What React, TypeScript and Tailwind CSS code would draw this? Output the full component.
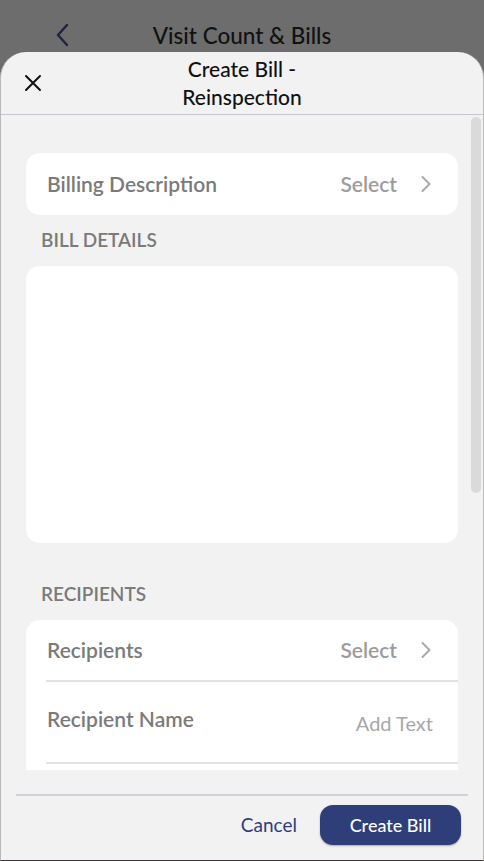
import type { ReactElement } from 'react';

function ChevronRight(): ReactElement {
  return (
    <svg width="12" height="18" viewBox="0 0 12 18" fill="none" className="shrink-0">
      <path d="M2.5 2 L9.5 9 L2.5 16" stroke="#a9a9a9" strokeWidth="2" strokeLinecap="round" strokeLinejoin="round" />
    </svg>
  );
}

function SelectRow({ label, bordered }: { label: string; bordered?: boolean }): ReactElement {
  return (
    <div className={`flex h-[62px] items-center pl-[21px] pr-[26px] ${bordered ? 'border-b-2 border-[#e1e1e6] ml-[20px] pl-px' : ''}`}>
      <span className="flex-1 text-[21px] font-semibold text-[#7a7a7a]">{label}</span>
      <span className="mr-[23px] text-[21px] font-semibold text-[#9c9c9c]">Select</span>
      <ChevronRight />
    </div>
  );
}

export default function App(): ReactElement {
  return (
    <div
      className="flex h-[861px] w-[484px] flex-col overflow-hidden bg-[#6d6d6d]"
      style={{ fontFamily: 'Lato, "Noto Sans", sans-serif' }}
    >
      {/* underlying page nav */}
      <div className="relative flex h-[53px] shrink-0 items-start justify-center pt-[20px]">
        <svg
          width="16"
          height="26"
          viewBox="0 0 16 26"
          fill="none"
          className="absolute left-[55px] top-[23px]"
        >
          <path d="M12 2 L3 12 L12 22" stroke="#1d2444" strokeWidth="2.4" strokeLinecap="round" strokeLinejoin="round" />
        </svg>
        <span className="text-[22.5px] font-medium leading-[32px] text-[#111]">Visit Count &amp; Bills</span>
      </div>

      {/* sheet */}
      <div className="relative z-10 -mt-px flex min-h-0 flex-1 flex-col rounded-t-[26px] border-x border-b border-x-[#b9b9b9] border-b-[#3b342f] bg-[#f2f2f2]">
        <div className="relative flex h-[62px] shrink-0 flex-col items-center justify-center">
          <svg width="20" height="20" viewBox="0 0 20 20" className="absolute left-[22px] top-[21px]">
            <path d="M3 3 L17 17 M17 3 L3 17" stroke="#111" strokeWidth="2" strokeLinecap="round" />
          </svg>
          <span className="text-[21px] font-medium leading-[28px] text-[#111]">Create Bill -</span>
          <span className="text-[21px] font-medium leading-[28px] text-[#111]">Reinspection</span>
        </div>
        <div className="h-px shrink-0 bg-[#c9c6d4]" />

        <div className="relative min-h-0 flex-1 overflow-hidden">
          <div className="absolute right-[2px] top-[2px] h-[376px] w-[10px] rounded-full bg-[#dadada]" />
          <div className="flex flex-col px-[25px] pt-[38px]">
            <div className="rounded-[14px] bg-white">
              <SelectRow label="Billing Description" />
            </div>

            <div className="flex h-[51px] items-center pl-[15px] text-[19px] font-semibold text-[#7a7a7a]">
              BILL DETAILS
            </div>
            <div className="h-[277px] rounded-[14px] bg-white" />

            <div className="flex h-[77px] items-end pb-[12px] pl-[15px] text-[19px] font-semibold text-[#7a7a7a]">
              RECIPIENTS
            </div>
            <div className="rounded-t-[14px] bg-white">
              <SelectRow label="Recipients" bordered />
              <div className="ml-[20px] flex h-[82px] items-start border-b-2 border-[#e1e1e6] pl-px pr-[25px] pt-[21px]">
                <span className="flex-1 text-[21px] font-semibold text-[#7a7a7a]">Recipient Name</span>
                <span className="mt-[5px] text-[20px] text-[#a8a8a8]">Add Text</span>
              </div>
              <div className="h-[20px]" />
            </div>
          </div>
        </div>

        <div className="flex h-[90px] shrink-0 flex-col px-[15px] pt-[24px]">
          <div className="h-[2px] bg-[#d3d0db]" />
          <div className="mt-[9px] flex items-center justify-end gap-[23px] pr-[7px]">
            <button className="text-[19px] text-[#2e3d78]">Cancel</button>
            <button className="h-[40px] w-[141px] rounded-[13px] bg-[#2e3e79] text-[18px] font-medium text-white shadow-[0_1px_2px_rgba(0,0,0,0.3)]">
              Create Bill
            </button>
          </div>
        </div>
      </div>
    </div>
  );
}
